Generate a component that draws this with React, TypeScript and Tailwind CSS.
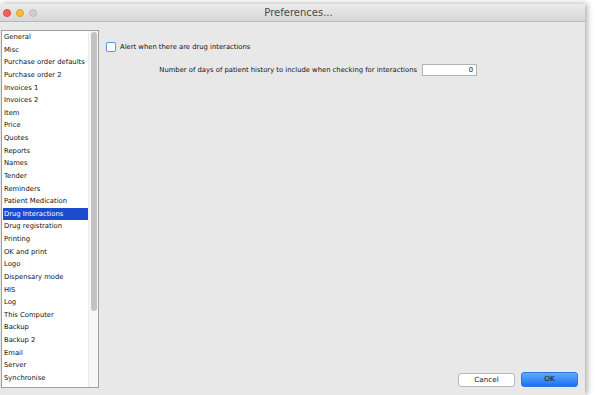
import React from "react";

const items = [
  "General","Misc","Purchase order defaults","Purchase order 2","Invoices 1","Invoices 2","Item","Price","Quotes","Reports","Names","Tender","Reminders","Patient Medication","Drug Interactions","Drug registration","Printing","OK and print","Logo","Dispensary mode","HIS","Log","This Computer","Backup","Backup 2","Email","Server","Synchronise","Customisation",
];

export default function App() {
  return (
    <div className="w-[600px] h-[395px] bg-white overflow-hidden pt-[4px]" style={{ fontFamily: '"DejaVu Sans", sans-serif' }}>
      <div className="w-[585px] h-[391px] flex flex-col shadow-[2px_0_6px_rgba(0,0,0,0.35)]">
        <div className="h-[18px] shrink-0 flex items-center bg-gradient-to-b from-[#ececec] to-[#d6d6d6] border-b border-[#b9b9b9]">
          <div className="flex items-center gap-[5px] pl-[3px]">
            <span className="w-[8px] h-[8px] rounded-full bg-[#fc5f57] border-[0.5px] border-[#e0443e]" />
            <span className="w-[8px] h-[8px] rounded-full bg-[#fdbc2e] border-[0.5px] border-[#dea123]" />
            <span className="w-[8px] h-[8px] rounded-full bg-[#cfcfcf] border-[0.5px] border-[#bdbdbd]" />
          </div>
          <div className="flex-1 text-center text-[10px] leading-[12px] text-[#4a4a4a] pr-[25px]">Preferences...</div>
        </div>
        <div className="flex-1 min-h-0 bg-[#e8e8e8] flex pt-[8px] pb-[7px] pl-[1px]">
          <div className="w-[98px] h-full min-h-0 border border-[#9f9f9f] bg-white flex overflow-hidden">
            <div className="flex-1 min-h-0 pl-[1px] overflow-hidden">
              {items.map((it) => (
                <div
                  key={it}
                  className={
                    it === "Drug Interactions"
                      ? "h-[12.63px] leading-[12.63px] text-[6.8px] pl-[1px] bg-[#1b4bcf] text-white whitespace-nowrap"
                      : "h-[12.63px] leading-[12.63px] text-[6.8px] pl-[1px] text-[#111] whitespace-nowrap"
                  }
                >
                  {it}
                </div>
              ))}
            </div>
            <div className="w-[10px] bg-[#f7f7f7] border-l border-[#ececec] flex justify-center pt-[1px]">
              <div className="w-[6px] h-[279px] rounded-full bg-[#c2c2c2]" />
            </div>
          </div>
          <div className="flex-1 flex flex-col">
            <div className="flex items-center mt-[12px] ml-[7px] gap-[4px]">
              <span className="w-[10px] h-[10px] rounded-[2px] bg-white border-[1.5px] border-[#6a98e6] shadow-[0_0_1px_#8bb0f0]" />
              <span className="text-[6.8px] text-[#111]">Alert when there are drug interactions</span>
            </div>
            <div className="flex items-center justify-end pr-[108px] mt-[12px] gap-[5px]">
              <span className="text-[6.8px] text-[#111]">Number of days of patient history to include when checking for interactions</span>
              <div className="w-[55px] h-[12px] bg-white border border-[#b3b3b3] text-[6.8px] text-[#111] flex items-center justify-end pr-[3px]">0</div>
            </div>
            <div className="flex-1" />
            <div className="flex justify-end gap-[6px] pr-[7px] pb-[1px] items-end">
              <div className="w-[57px] h-[14px] rounded-[3px] bg-white border border-[#b8b8b8] text-[7.2px] text-[#111] flex items-center justify-center">Cancel</div>
              <div className="w-[57px] h-[15px] rounded-[3px] bg-gradient-to-b from-[#62aafc] to-[#1a6ef4] border border-[#2d74e6] text-[7.2px] text-[#111] flex items-center justify-center">OK</div>
            </div>
          </div>
        </div>
      </div>
    </div>
  );
}
